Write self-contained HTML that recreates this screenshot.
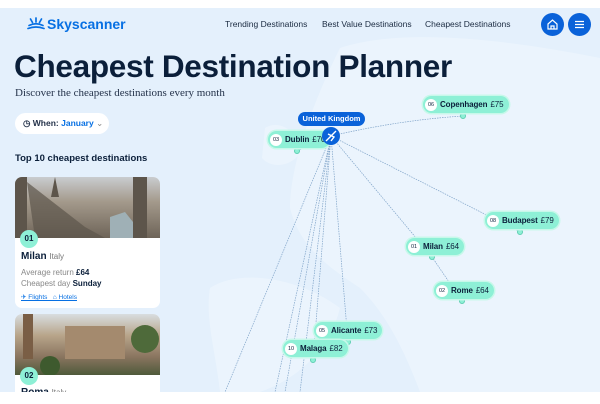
<!DOCTYPE html><html><head><style>
*{margin:0;padding:0;box-sizing:border-box}
body{width:600px;height:400px;overflow:hidden;background:#fff;font-family:"Liberation Sans",sans-serif;position:relative;color:#0b1f3a}
#bg{position:absolute;left:0;top:8px;width:600px;height:384px;background:#e4f0fc;overflow:hidden}
.a{position:absolute}
.pill{position:absolute;height:17px;border-radius:9px;background:#8ef0d6;font-size:8px;font-weight:bold;display:flex;align-items:center;padding:0 5px 0 2px;white-space:nowrap;box-shadow:0 0 0 1.5px #c8f8ea;letter-spacing:-0.1px}
.pill i{font-style:normal;display:inline-block;width:12px;height:12px;border-radius:50%;background:#fff;font-size:5.5px;font-weight:normal;text-align:center;line-height:12px;margin-right:3px}
.pill b{font-weight:normal;margin-left:3px}
.nav{font-size:8.5px;color:#1a2a40;top:19px}
.card{position:absolute;left:15px;width:145px;background:#fff;border-radius:7px;overflow:hidden}
.num{position:absolute;width:18px;height:18px;border-radius:50%;background:#8ef0d6;font-size:8px;font-weight:bold;text-align:center;line-height:18px}
</style></head><body>
<div id="bg">
<svg class="a" style="left:0;top:0" width="600" height="384">
<g fill="#ebf4fd">
<path d="M340 40 C400 20 500 30 600 50 L600 384 L420 384 C400 330 380 300 360 280 C330 260 300 240 290 200 C290 160 310 100 340 40Z"/>
<path d="M210 280 C240 260 300 270 340 300 C330 340 300 370 260 384 L220 384 C215 340 205 310 210 280Z"/>
<path d="M265 120 C280 110 300 125 300 145 C290 160 270 160 262 150Z"/>
</g>
<g stroke="#7fa3c8" stroke-width="0.7" fill="none" stroke-dasharray="1.5 1">
<path d="M331 128 Q400 112 463 108"/>
<path d="M331 128 L297 143"/>
<path d="M331 128 L520 224"/>
<path d="M331 128 L432 249"/>
<path d="M432 249 L462 293"/>
<path d="M331 128 L348 334"/>
<path d="M331 128 L313 352"/>
<path d="M331 128 L225 384"/>
<path d="M331 128 L275 384"/>
<path d="M331 128 L285 384"/>
<path d="M331 128 L300 384"/>
</g>
<g fill="#8ef0d6" stroke="#5fcfb2" stroke-width="1">
<circle cx="463" cy="108" r="2.5"/><circle cx="297" cy="143" r="2.5"/><circle cx="520" cy="224" r="2.5"/><circle cx="432" cy="249" r="2.5"/><circle cx="462" cy="293" r="2.5"/><circle cx="348" cy="334" r="2.5"/><circle cx="313" cy="352" r="2.5"/>
</g>
</svg>
</div>
<!-- header -->
<svg class="a" style="left:27px;top:17px" width="18" height="13"><g stroke="#0770e3" stroke-width="1.7" stroke-linecap="round" fill="none"><path d="M2 8.5 Q9 5 16 8.5"/><path d="M1 11.5 Q9 8.5 17 11.5"/><path d="M9 1 L9 5 M3.5 2 L5.5 5.5 M14.5 2 L12.5 5.5"/></g></svg>
<div class="a" style="left:47px;top:16px;font-size:14px;font-weight:bold;color:#0770e3">Skyscanner</div>
<div class="a nav" style="left:225px">Trending Destinations</div>
<div class="a nav" style="left:322px">Best Value Destinations</div>
<div class="a nav" style="left:425px">Cheapest Destinations</div>
<div class="a" style="left:541px;top:13px;width:23px;height:23px;border-radius:50%;background:#0a62d9"></div>
<svg class="a" style="left:546px;top:18px" width="13" height="13"><path d="M2 6 L6.5 2 L11 6 L11 11 L2 11Z M5 11 L5 8 L8 8 L8 11" stroke="#fff" stroke-width="1.2" fill="none"/></svg>
<div class="a" style="left:568px;top:13px;width:23px;height:23px;border-radius:50%;background:#0a62d9"></div>
<svg class="a" style="left:573px;top:18px" width="13" height="13"><path d="M2 3.5H11M2 6.5H11M2 9.5H11" stroke="#fff" stroke-width="1.3"/></svg>
<div class="a" style="left:14px;top:48px;font-size:31.5px;font-weight:bold;color:#0b1f3a;letter-spacing:-0.3px">Cheapest Destination Planner</div>
<div class="a" style="left:15px;top:87px;font-size:11px;font-family:'Liberation Serif',serif;color:#24324a">Discover the cheapest destinations every month</div>
<div class="a" style="left:15px;top:113px;width:94px;height:21px;border-radius:11px;background:#fff;font-size:8.5px;font-weight:bold;line-height:21px;padding-left:8px;color:#24324a">◷ When: <span style="color:#0770e3">January</span> <span style="font-weight:normal;color:#888">⌄</span></div>
<div class="a" style="left:15px;top:153px;font-size:9.5px;font-weight:bold">Top 10 cheapest destinations</div>
<!-- cards -->
<div class="card" style="top:177px;height:131px">
<div style="height:61px;background:linear-gradient(180deg,#c9cccf 0%,#a49a8c 40%,#6e6458 100%)"></div>
<svg class="a" style="left:0;top:0" width="145" height="61"><g fill="#5d554b"><path d="M0 0H12V61H0Z"/><path d="M12 5 L70 50 L90 61 L20 61Z" opacity=".7"/><path d="M118 0H132V61H118Z"/><path d="M40 0L44 20L36 20Z"/></g><path d="M95 40 L110 35 L118 45 L118 61 L95 61Z" fill="#9fb0b6"/></svg>
<div class="num" style="left:5px;top:53px">01</div>
<div class="a" style="left:6px;top:74px;font-size:10px;font-weight:bold">Milan <span style="font-weight:normal;color:#777;font-size:8px">Italy</span></div>
<div class="a" style="left:6px;top:90px;font-size:8px;color:#888;line-height:11px">Average return <b style="color:#0b1f3a">£64</b><br>Cheapest day <b style="color:#0b1f3a">Sunday</b></div>
<div class="a" style="left:6px;top:116px;font-size:6.5px;color:#0770e3;text-decoration:underline">✈ Flights &nbsp; ⌂ Hotels</div>
</div>
<div class="card" style="top:314px;height:90px">
<div style="height:61px;background:linear-gradient(180deg,#d8dde0 0%,#b8a58a 35%,#8a7560 70%,#4f5a3a 100%)"></div>
<svg class="a" style="left:0;top:0" width="145" height="61"><path d="M8 0H18V45H8Z" fill="#7a5e45"/><path d="M50 12 H110 V45 H50Z" fill="#a48a6e"/><circle cx="130" cy="25" r="14" fill="#4e6a3a"/><circle cx="35" cy="52" r="10" fill="#3e5a2e"/></svg>
<div class="num" style="left:5px;top:53px">02</div>
<div class="a" style="left:6px;top:73px;font-size:10px;font-weight:bold">Roma <span style="font-weight:normal;color:#777;font-size:8px">Italy</span></div>
</div>
<div class="a" style="left:0;top:392px;width:600px;height:8px;background:#fff"></div>
<!-- pills -->
<div class="pill" style="left:423px;top:96px"><i>06</i>Copenhagen<b>£75</b></div>
<div class="pill" style="left:268px;top:131px"><i>03</i>Dublin<b>£70</b></div>
<div class="pill" style="left:485px;top:212px"><i>08</i>Budapest<b>£79</b></div>
<div class="pill" style="left:406px;top:238px"><i>01</i>Milan<b>£64</b></div>
<div class="pill" style="left:434px;top:282px"><i>02</i>Rome<b>£64</b></div>
<div class="pill" style="left:314px;top:322px"><i>05</i>Alicante<b>£73</b></div>
<div class="pill" style="left:283px;top:340px"><i>10</i>Malaga<b>£82</b></div>
<div class="a" style="left:298px;top:112px;width:67px;height:14px;border-radius:7px;background:#0a62d9;color:#fff;font-size:7.5px;font-weight:bold;text-align:center;line-height:14px">United Kingdom</div>
<svg class="a" style="left:321px;top:126px" width="20" height="20"><circle cx="10" cy="10" r="9" fill="#0a62d9"/><path d="M5 15 L15 5 M7 8 L13 11 L10 15" stroke="#fff" stroke-width="1.4" fill="none"/></svg>
</body></html>
